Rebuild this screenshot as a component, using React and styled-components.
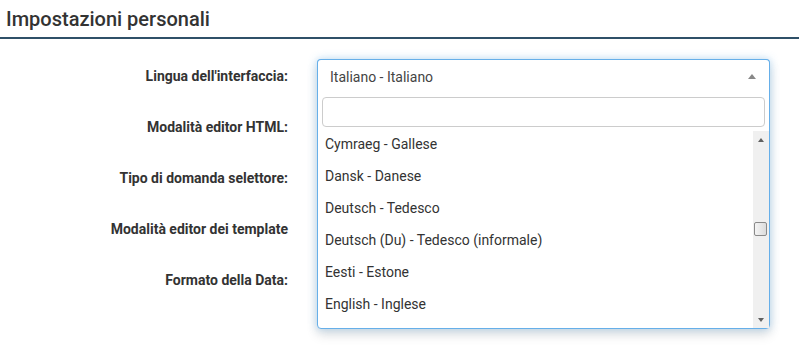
import React from "react";
import styled, { createGlobalStyle } from "styled-components";

const Global = createGlobalStyle`
  html, body { margin: 0; padding: 0; background: #fff; }
  body { font-family: Roboto, "Liberation Sans", sans-serif; color: #333; }
`;

const Page = styled.div`
  width: 799px;
  height: 351px;
  overflow: hidden;
  position: relative;
`;

const Header = styled.div`
  height: 39px;
  padding-left: 6px;
  border-bottom: 2px solid #2f5068;
  display: flex;
  align-items: center;
  box-sizing: border-box;
`;

const Title = styled.h2`
  margin: 0;
  font-size: 20px;
  font-weight: 500;
  color: #333;
  padding-bottom: 0px;
`;

const Form = styled.div`
  padding-top: 20px;
  display: flex;
  flex-direction: column;
  gap: 17px;
`;

const Row = styled.div`
  display: flex;
  align-items: center;
  height: 34px;
  gap: 29px;
`;

const Label = styled.div`
  width: 288px;
  text-align: right;
  font-size: 14px;
  font-weight: 700;
  color: #333;
  flex-shrink: 0;
`;

const SelectWrap = styled.div`
  position: relative;
  width: 453px;
  height: 34px;
`;

const Control = styled.div`
  height: 34px;
  box-sizing: border-box;
  border: 1px solid #66afe9;
  border-radius: 4px 4px 0 0;
  border-bottom: none;
  display: flex;
  align-items: center;
  justify-content: space-between;
  padding: 0 12px 0 12px;
  font-size: 14px;
  color: #444;
  background: #fff;
  position: relative;
  z-index: 2;
`;

const Caret = styled.span`
  width: 0;
  height: 0;
  border-left: 4px solid transparent;
  border-right: 4px solid transparent;
  border-bottom: 5px solid #888;
  margin-right: 1px;
`;

const Dropdown = styled.div`
  position: absolute;
  left: 0;
  right: 0;
  top: 0;
  height: 270px;
  box-sizing: border-box;
  border: 1px solid #66afe9;
  border-radius: 4px;
  background: #fff;
  box-shadow: 0 0 8px rgba(102, 175, 233, 0.45), 0 6px 12px rgba(0, 0, 0, 0.12);
  z-index: 1;
  display: flex;
  flex-direction: column;
  padding-top: 34px;
`;

const SearchBox = styled.div`
  padding: 3px 4px 0 4px;
`;

const Search = styled.input`
  width: 100%;
  height: 30px;
  box-sizing: border-box;
  border: 1px solid #ccc;
  border-radius: 4px;
  outline: none;
  font-family: inherit;
  font-size: 14px;
  padding: 0 6px;
`;

const ListArea = styled.div`
  margin-top: 4px;
  flex: 1;
  display: flex;
  overflow: hidden;
`;

const List = styled.ul`
  list-style: none;
  margin: -3px 0 0 0;
  padding: 0;
  flex: 1;
`;

const Item = styled.li`
  height: 32px;
  line-height: 32px;
  padding-left: 7px;
  font-size: 14px;
  color: #333;
  white-space: nowrap;
`;

const ScrollBar = styled.div`
  width: 16px;
  background: #f0f0f0;
  display: flex;
  flex-direction: column;
  align-items: center;
`;

const ScrollArrow = styled.div`
  height: 17px;
  width: 16px;
  display: flex;
  align-items: center;
  justify-content: center;
  &::after {
    content: "";
    width: 0;
    height: 0;
    border-left: 3.5px solid transparent;
    border-right: 3.5px solid transparent;
    ${(p) =>
      p.$down
        ? "border-top: 4px solid #606060;"
        : "border-bottom: 4px solid #606060;"}
  }
`;

const Track = styled.div`
  flex: 1;
  width: 100%;
  display: flex;
  justify-content: center;
  padding-top: 74px;
  box-sizing: border-box;
`;

const Thumb = styled.div`
  width: 13px;
  height: 14px;
  box-sizing: border-box;
  border: 1px solid #8a8a8a;
  border-radius: 2px;
  background: linear-gradient(to right, #f4f4f4, #dcdcdc);
  margin-left: -1px;
`;

const items = [
  "Cymraeg - Gallese",
  "Dansk - Danese",
  "Deutsch - Tedesco",
  "Deutsch (Du) - Tedesco (informale)",
  "Eesti - Estone",
  "English - Inglese",
];

const labels = [
  "Lingua dell'interfaccia:",
  "Modalità editor HTML:",
  "Tipo di domanda selettore:",
  "Modalità editor dei template",
  "Formato della Data:",
];

export default function App() {
  return (
    <Page>
      <Global />
      <Header>
        <Title>Impostazioni personali</Title>
      </Header>
      <Form>
        {labels.map((l, i) => (
          <Row key={l}>
            <Label>{l}</Label>
            {i === 0 && (
              <SelectWrap>
                <Control>
                  <span>Italiano - Italiano</span>
                  <Caret />
                </Control>
                <Dropdown>
                  <SearchBox>
                    <Search type="text" />
                  </SearchBox>
                  <ListArea>
                    <List>
                      {items.map((it) => (
                        <Item key={it}>{it}</Item>
                      ))}
                    </List>
                    <ScrollBar>
                      <ScrollArrow />
                      <Track>
                        <Thumb />
                      </Track>
                      <ScrollArrow $down />
                    </ScrollBar>
                  </ListArea>
                </Dropdown>
              </SelectWrap>
            )}
          </Row>
        ))}
      </Form>
    </Page>
  );
}
